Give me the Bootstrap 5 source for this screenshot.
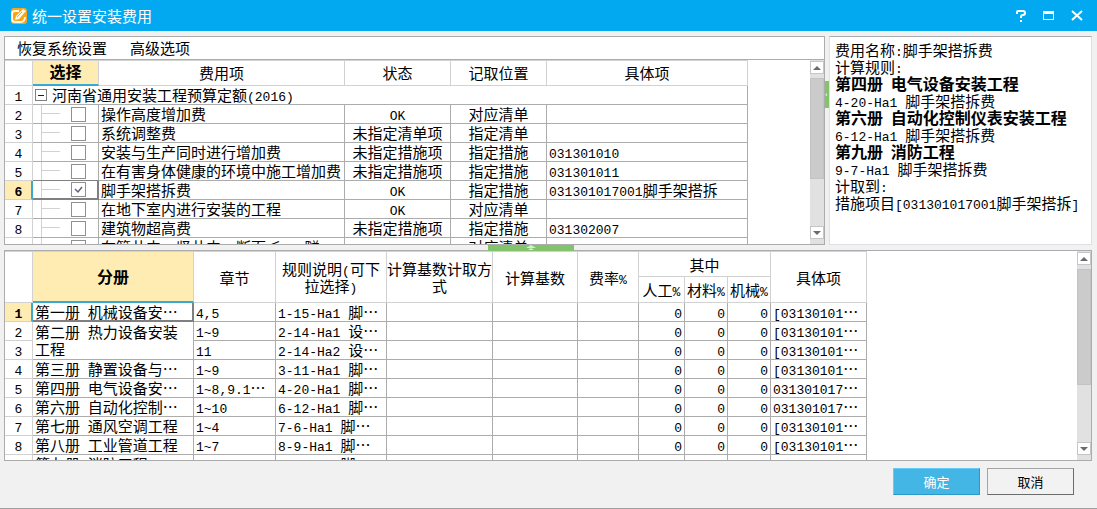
<!DOCTYPE html>
<html lang="zh-CN">
<head>
<meta charset="utf-8">
<meta name="viewport" content="width=device-width, initial-scale=1">
<title>统一设置安装费用</title>
<link href="https://cdn.jsdelivr.net/npm/bootstrap@5.3.0/dist/css/bootstrap.min.css" rel="stylesheet">
<style>
:root { --line:#acacac; --soft:#d2d2d2; --sel:#ffecb3; --accent:#38a8d4; }
body { background:#f1f1f1; color:#000; font:15px/17px "Noto Sans CJK SC","Liberation Sans",sans-serif; min-height:100vh; border-bottom:1px solid #a0a0a0; }
.titlebar { background:#02a9f1; color:#fff; height:31px; padding:0 12px 0 11px; }
.titlebar button { background:none; border:0; padding:0; width:16px; height:16px; display:flex; }
.titlebar .tools { gap:12px; }
.titlebar .caption { margin-left:5px; }
.lat { font-family:"Liberation Mono",monospace; font-size:13px; line-height:0; }
.pane { background:#fff; border:1px solid var(--line); overflow:hidden; min-height:0; min-width:0; }
.work { padding:5px 5px 0 4px; min-height:0; }
.upper, .lower { flex:1 1 0; min-height:0; }
.split-h { height:5px; padding-right:34px; }
.split-v { width:4px; }
.grip-h { background:#82c36c; width:86px; height:6px; position:relative; z-index:1; }
.grip-v { background:#82c36c; width:4px; height:27px; margin-top:45px; }
.menu { height:23px; padding:0 12px 2px; gap:23px; border-bottom:1px solid var(--line); }
.menu button { border:0; background:none; padding:0; color:#000; }
.info { width:263px; border-color:#a9a9b4 #dfdfe6 #dfdfe6; padding:4px 5px; flex:none; }
.info div { white-space:nowrap; }
.info strong { font-size:16px; display:block; }
.grid-scroll { min-height:0; min-width:0; overflow:hidden; }
.sheet { table-layout:fixed; border-collapse:separate; border-spacing:0; }
.sheet th, .sheet td { padding:0 2px; border:0 solid var(--line); border-width:0 1px 1px 0; white-space:nowrap; line-height:18px; height:19px; vertical-align:middle; font-weight:400; }
.sheet thead th { border-color:var(--soft); text-align:center; height:26px; line-height:17px; white-space:normal; }
.sheet thead tr:first-child th { border-top:1px solid var(--soft); }
.upper .sheet thead th { padding-bottom:2px; }
.sheet tbody th { border-color:var(--soft); text-align:center; }
.sheet thead th.picked { background:var(--sel); font-weight:700; font-size:16px; border-bottom:2px solid var(--accent); }
.sheet tbody th.picked { background:var(--sel); font-weight:700; border-right:2px solid var(--accent); padding-left:3px; }
.sheet td.cursor { border-right:2px solid #808080; border-bottom:2px solid #808080; line-height:17px; }
.sheet td.over-cursor { border-bottom-color:#808080; }
.sheet td.merged { white-space:normal; line-height:17px; vertical-align:top; padding-top:1px; }
.sheet .tick { padding:0 0 0 8px; }
.branch { display:flex; align-items:center; height:18px; border-left:1px solid var(--soft); }
.branch::before { content:""; width:18px; height:1px; background:var(--soft); margin-right:11px; margin-top:-1px; }
.cursor .branch { height:17px; }
.branch input { appearance:none; width:15px; height:15px; border:1px solid #909090; background:#fff; margin:0; }
.branch input:checked { background:url("data:image/svg+xml,%3Csvg xmlns='http://www.w3.org/2000/svg' viewBox='0 0 13 13'%3E%3Cpath d='M3 6l3 3 4-5' fill='none' stroke='%23606078' stroke-width='1.5'/%3E%3C/svg%3E"); }
.fold { width:12px; height:12px; border:1px solid #808080; background:#fff; padding:0; display:flex; align-items:center; justify-content:center; margin-right:5px; }
.fold::before { content:""; width:6px; height:1px; background:#202020; }
.rail { width:14px; background:#e1e1e1; flex:none; padding:1px 0 5px; }
.rail button { height:13px; width:14px; border:1px solid #c6c6c6; background:#fff; padding:0; display:flex; align-items:center; justify-content:center; }
.thumb { background:#cbcbcb; border:1px solid #c3c3c3; margin-top:4px; }
.upper .thumb { height:101px; }
.lower .thumb { height:116px; }
.foot { height:47px; padding:7px 23px 0 0; gap:7px; flex:none; }
.foot .btn { width:87px; height:27px; border-radius:0; padding:0; font-size:13px; line-height:17px; }
.btn-ok { background:#43b6e5; border-color:#63cdf7 #2b9aca #2b9aca #63cdf7; color:#fff; }
.btn-no { background:#f2f2f2; border-color:#a4a4a4 #6c6c6c #6c6c6c #a4a4a4; color:#000; }
</style>
</head>
<body class="d-flex flex-column vh-100">
<header class="titlebar d-flex align-items-center flex-shrink-0">
  <svg width="16" height="16" viewBox="0 0 16 16" aria-hidden="true"><rect width="16" height="16" rx="3" fill="#f9a51b"/><path d="M8 3H4C2 3 1 4 1 6v5c0 2 1 3 3 3h6c2 0 4-2 4-5" fill="none" stroke="#fff8e5" stroke-width="2"/><path d="M4 12l1-4 7-7 3 2-7 8z" fill="#fff8e5"/><path d="M6 9l5-5" stroke="#f5a52b" stroke-width="1"/></svg>
  <span class="caption me-auto">统一设置安装费用</span>
  <div class="tools d-flex">
    <button type="button" aria-label="帮助"><svg width="16" height="16" viewBox="0 0 16 16"><path d="M4 6V4q0-1 1-1h5q2 0 2 2t-2 2q-2 0-2 2v1M8 12v2" fill="none" stroke="#fff" stroke-width="2"/></svg></button>
    <button type="button" aria-label="最大化"><svg width="16" height="16" viewBox="0 0 16 16"><path d="M2 3h11v9H2zM3 6v5h9V6z" fill="#fff" fill-rule="evenodd"/></svg></button>
    <button type="button" aria-label="关闭"><svg width="16" height="16" viewBox="0 0 16 16"><path d="M3 3l10 9M13 3L3 12" stroke="#fff" stroke-width="2"/></svg></button>
  </div>
</header>
<main class="work d-flex flex-column flex-grow-1">
  <div class="upper d-flex">
    <section class="pane d-flex flex-column flex-grow-1">
      <nav class="menu d-flex align-items-center flex-shrink-0"><button type="button">恢复系统设置</button><button type="button">高级选项</button></nav>
      <div class="grid-scroll d-flex flex-grow-1">
        <div class="grid-scroll flex-grow-1">
        <table class="sheet" style="width:743px">
          <colgroup><col style="width:28px"><col style="width:66px"><col style="width:246px"><col style="width:106px"><col style="width:96px"><col style="width:201px"></colgroup>
          <thead><tr><th></th><th class="picked">选择</th><th>费用项</th><th>状态</th><th>记取位置</th><th>具体项</th></tr></thead>
          <tbody>
            <tr><th><span class="lat">1</span></th><td colspan="5"><div class="d-flex align-items-center"><button class="fold" type="button" aria-label="折叠"></button><span>河南省通用安装工程预算定额<span class="lat">(2016)</span></span></div></td></tr>
            <tr><th><span class="lat">2</span></th><td class="tick"><div class="branch"><input type="checkbox" aria-labelledby="f2"></div></td><td id="f2">操作高度增加费</td><td class="text-center"><span class="lat">OK</span></td><td class="text-center">对应清单</td><td></td></tr>
            <tr><th><span class="lat">3</span></th><td class="tick"><div class="branch"><input type="checkbox" aria-labelledby="f3"></div></td><td id="f3">系统调整费</td><td class="text-center">未指定清单项</td><td class="text-center">指定清单</td><td></td></tr>
            <tr><th><span class="lat">4</span></th><td class="tick"><div class="branch"><input type="checkbox" aria-labelledby="f4"></div></td><td id="f4">安装与生产同时进行增加费</td><td class="text-center">未指定措施项</td><td class="text-center">指定措施</td><td><span class="lat">031301010</span></td></tr>
            <tr><th><span class="lat">5</span></th><td class="tick over-cursor"><div class="branch"><input type="checkbox" aria-labelledby="f5"></div></td><td id="f5">在有害身体健康的环境中施工增加费</td><td class="text-center">未指定措施项</td><td class="text-center">指定措施</td><td><span class="lat">031301011</span></td></tr>
            <tr><th class="picked"><span class="lat">6</span></th><td class="tick cursor"><div class="branch"><input type="checkbox" checked aria-labelledby="f6"></div></td><td id="f6">脚手架搭拆费</td><td class="text-center"><span class="lat">OK</span></td><td class="text-center">指定措施</td><td><span class="lat">031301017001</span>脚手架搭拆</td></tr>
            <tr><th><span class="lat">7</span></th><td class="tick"><div class="branch"><input type="checkbox" aria-labelledby="f7"></div></td><td id="f7">在地下室内进行安装的工程</td><td class="text-center"><span class="lat">OK</span></td><td class="text-center">对应清单</td><td></td></tr>
            <tr><th><span class="lat">8</span></th><td class="tick"><div class="branch"><input type="checkbox" aria-labelledby="f8"></div></td><td id="f8">建筑物超高费</td><td class="text-center">未指定措施项</td><td class="text-center">指定措施</td><td><span class="lat">031302007</span></td></tr>
            <tr><th><span class="lat">9</span></th><td class="tick"><div class="branch"><input type="checkbox" aria-labelledby="f9"></div></td><td id="f9">在管井内、竖井内、断面≤<span class="lat">2m2</span>隧</td><td class="text-center"><span class="lat">OK</span></td><td class="text-center">对应清单</td><td></td></tr>
          </tbody>
        </table>
        </div>
        <div class="rail d-flex flex-column">
          <button type="button" aria-label="向上"><svg width="8" height="4" viewBox="0 0 8 4"><path d="M4 0l4 4H0z" fill="#6a6a72"/></svg></button>
          <div class="thumb"></div>
          <button type="button" class="mt-auto" aria-label="向下"><svg width="8" height="4" viewBox="0 0 8 4"><path d="M0 0h8L4 4z" fill="#6a6a72"/></svg></button>
        </div>
      </div>
    </section>
    <div class="split-v flex-shrink-0"><div class="grip-v d-flex align-items-center"><svg width="4" height="5" viewBox="0 0 4 5"><path d="M0 3l2-2v3z" fill="#d8efcf"/></svg></div></div>
    <aside class="pane info">
      <div>费用名称<span class="lat">:</span>脚手架搭拆费</div>
      <div>计算规则<span class="lat">:</span></div>
      <div><strong>第四册<span class="lat"> </span>电气设备安装工程</strong></div>
      <div><span class="lat">4-20-Ha1 </span>脚手架搭拆费</div>
      <div><strong>第六册<span class="lat"> </span>自动化控制仪表安装工程</strong></div>
      <div><span class="lat">6-12-Ha1 </span>脚手架搭拆费</div>
      <div><strong>第九册<span class="lat"> </span>消防工程</strong></div>
      <div><span class="lat">9-7-Ha1 </span>脚手架搭拆费</div>
      <div>计取到<span class="lat">:</span></div>
      <div>措施项目<span class="lat">[031301017001</span>脚手架搭拆<span class="lat">]</span></div>
    </aside>
  </div>
  <div class="split-h d-flex justify-content-center flex-shrink-0"><div class="grip-h d-flex justify-content-center"><svg width="10" height="6" viewBox="0 0 10 6"><path d="M5 0l5 3H0zM5 3l3 2H2z" fill="#d8efcf"/></svg></div></div>
  <section class="pane lower d-flex">
    <div class="grid-scroll flex-grow-1">
    <table class="sheet" style="width:862px">
      <colgroup><col style="width:28px"><col style="width:161px"><col style="width:82px"><col style="width:111px"><col style="width:106px"><col style="width:85px"><col style="width:61px"><col style="width:46px"><col style="width:43px"><col style="width:43px"><col style="width:96px"></colgroup>
      <thead>
        <tr><th rowspan="2"></th><th rowspan="2" class="picked">分册</th><th rowspan="2">章节</th><th rowspan="2">规则说明<span class="lat">(</span>可下<br>拉选择<span class="lat">)</span></th><th rowspan="2" class="px-0">计算基数计取方式</th><th rowspan="2">计算基数</th><th rowspan="2">费率<span class="lat">%</span></th><th colspan="3">其中</th><th rowspan="2">具体项</th></tr>
        <tr><th>人工<span class="lat">%</span></th><th>材料<span class="lat">%</span></th><th>机械<span class="lat">%</span></th></tr>
      </thead>
      <tbody id="books"></tbody>
    </table>
    </div>
    <div class="rail d-flex flex-column">
      <button type="button" aria-label="向上"><svg width="8" height="4" viewBox="0 0 8 4"><path d="M4 0l4 4H0z" fill="#6a6a72"/></svg></button>
      <div class="thumb"></div>
      <button type="button" class="mt-auto" aria-label="向下"><svg width="8" height="4" viewBox="0 0 8 4"><path d="M0 0h8L4 4z" fill="#6a6a72"/></svg></button>
    </div>
  </section>
</main>
<footer class="foot d-flex justify-content-end"><button type="button" class="btn btn-ok">确定</button><button type="button" class="btn btn-no">取消</button></footer>
<script src="https://cdn.jsdelivr.net/npm/bootstrap@5.3.0/dist/js/bootstrap.bundle.min.js"></script>
<script>
// volume, chapters, rule code, rule text, item; a null volume continues the one above
const rows = [
  ['第一册 机械设备安…','4,5','1-15-Ha1 ','脚…','[03130101'],
  ['第二册 热力设备安装工程','1~9','2-14-Ha1 ','设…','[03130101'],
  [null,'11','2-14-Ha2 ','设…','[03130101'],
  ['第三册 静置设备与…','1~9','3-11-Ha1 ','脚…','[03130101'],
  ['第四册 电气设备安…','1~8,9.1…','4-20-Ha1 ','脚…','031301017'],
  ['第六册 自动化控制…','1~10','6-12-Ha1 ','脚…','031301017'],
  ['第七册 通风空调工程','1~4','7-6-Ha1 ','脚…','[03130101'],
  ['第八册 工业管道工程','1~7','8-9-Ha1 ','脚…','[03130101'],
  ['第九册 消防工程','1~5','9-7-Ha1 ','脚…','[03130101']
];
const lat = s => s.replace(/[\x20-\x7e]+/g, m => `<span class="lat">${m}</span>`);
document.getElementById('books').innerHTML = rows.map((r, i) => {
  const merged = rows[i + 1] && rows[i + 1][0] === null;
  const cls = i === 0 ? 'cursor' : merged ? 'merged' : '';
  const book = r[0] === null ? '' : `<td class="${cls}"${merged ? ' rowspan="2"' : ''}>${lat(r[0])}</td>`;
  return `<tr><th class="${i === 0 ? 'picked' : ''}">${lat(String(i + 1))}</th>${book}<td>${lat(r[1])}</td><td>${lat(r[2])}${r[3]}</td><td></td><td></td><td></td>` +
    `<td class="text-end">${lat('0')}</td>`.repeat(3) + `<td>${lat(r[4])}…</td></tr>`;
}).join('');
</script>
</body>
</html>
